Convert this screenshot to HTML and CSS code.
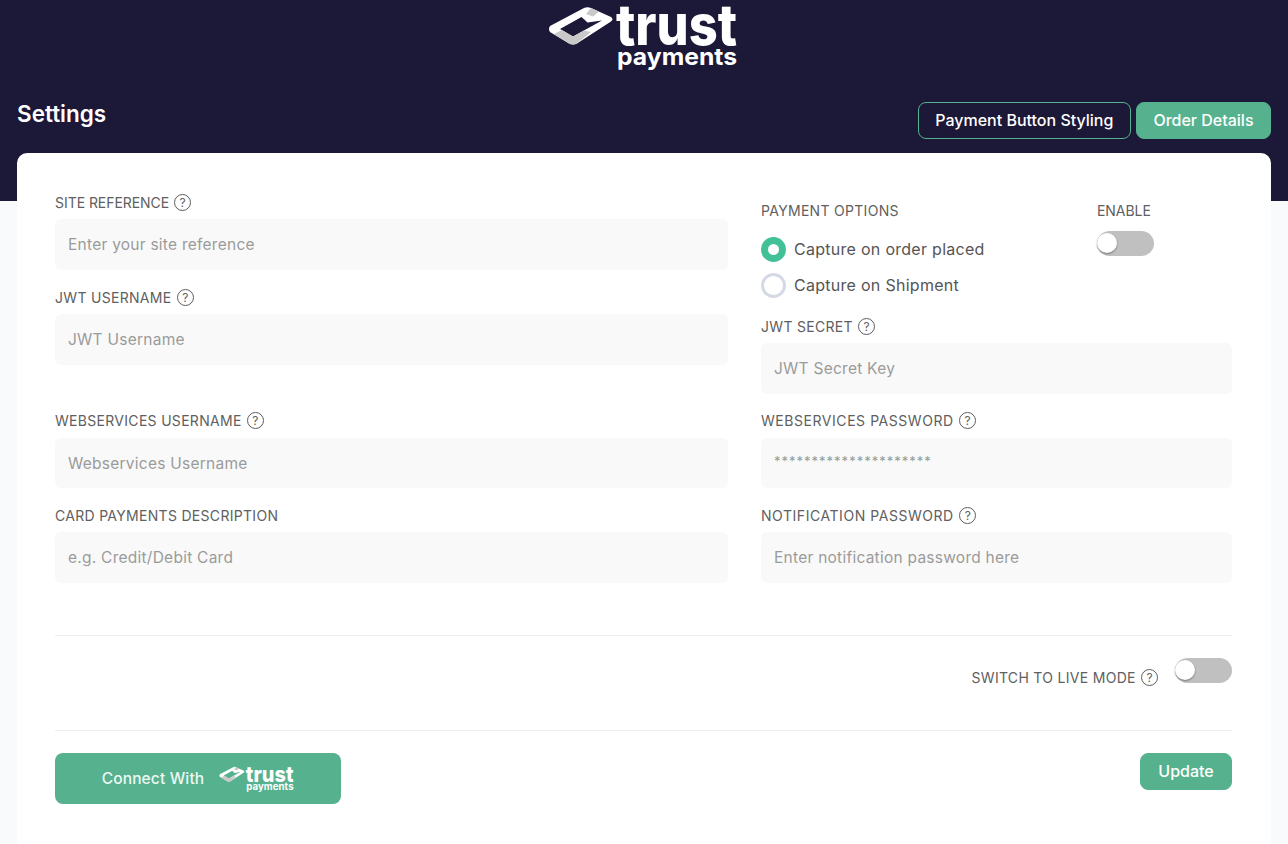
FILE: index.html
```html
<!DOCTYPE html>
<html lang="en">
<head>
  <meta charset="UTF-8" />
  <title>Trust Payments Settings</title>
  <link rel="stylesheet" href="styles.css">
</head>
<body>

<div class="top-bar">
  <svg class="top-logo" viewBox="0 0 190 70">
    <path class="logo-white" fill-rule="evenodd" d="M2 23 L36 5 Q39.500 3.500 43 5 L63 14 Q66 16 63 18.500 L29 40.500 Q25 42.500 21 40.500 L2 29 Q0 26 2 23 Z M12 26 L25 33.500 L54 17.500 L39.500 19.500 L33.500 14 Z"/>
    <path class="logo-grey" d="M43 5 L51 8.500 L45 13.500 L38 11 Z"/>
    <path class="logo-grey" d="M6 31 L14 27 L25 33.500 L36 27.500 L43 29 L29 40.500 Q25 42.500 21 40.500 Z"/>
    <text x="68" y="42" textLength="121" lengthAdjust="spacingAndGlyphs" class="logo-trust">trust</text>
    <text x="69" y="62" textLength="120" lengthAdjust="spacingAndGlyphs" class="logo-payments">payments</text>
  </svg>
  <div class="title-row">
    <h1>Settings</h1>
    <div class="top-btns">
      <button class="btn btn-outline">Payment Button Styling</button>
      <button class="btn btn-green">Order Details</button>
    </div>
  </div>
</div>

<div class="card">
  <div class="form-grid">
    <div>
      <div class="field">
        <label class="narrow">SITE REFERENCE <span class="help">?</span></label>
        <input type="text" placeholder="Enter your site reference" />
      </div>
      <div class="field">
        <label>JWT USERNAME <span class="help">?</span></label>
        <input type="text" placeholder="JWT Username" />
      </div>
    </div>

    <div class="right-top">
      <div class="options-row">
        <div>
          <label>PAYMENT OPTIONS</label>
          <div class="radio-row"><span class="radio checked"></span>Capture on order placed</div>
          <div class="radio-row"><span class="radio"></span>Capture on Shipment</div>
        </div>
        <div class="enable-col">
          <label class="narrow">ENABLE</label>
          <span class="toggle"></span>
        </div>
      </div>
      <div class="field">
        <label>JWT SECRET <span class="help">?</span></label>
        <input type="text" placeholder="JWT Secret Key" />
      </div>
    </div>

    <div class="field up short">
      <label>WEBSERVICES USERNAME <span class="help">?</span></label>
      <input type="text" placeholder="Webservices Username" />
    </div>
    <div class="field up short">
      <label class="wide">WEBSERVICES PASSWORD <span class="help">?</span></label>
      <input class="stars" type="text" value="*********************" />
    </div>

    <div class="field">
      <label>CARD PAYMENTS DESCRIPTION</label>
      <input type="text" placeholder="e.g. Credit/Debit Card" />
    </div>
    <div class="field">
      <label class="wide">NOTIFICATION PASSWORD <span class="help">?</span></label>
      <input type="text" placeholder="Enter notification password here" />
    </div>
  </div>

  <div class="live-row">
    <label>SWITCH TO LIVE MODE <span class="help">?</span></label>
    <span class="toggle"></span>
  </div>

  <div class="bottom-row">
    <button class="btn-connect">Connect With
      <svg class="small-logo" viewBox="0 0 190 70">
        <path class="logo-white" fill-rule="evenodd" d="M2 23 L36 5 Q39.500 3.500 43 5 L63 14 Q66 16 63 18.500 L29 40.500 Q25 42.500 21 40.500 L2 29 Q0 26 2 23 Z M12 26 L25 33.500 L54 17.500 L39.500 19.500 L33.500 14 Z"/>
        <path class="logo-grey" d="M43 5 L51 8.500 L45 13.500 L38 11 Z"/>
        <path class="logo-grey" d="M6 31 L14 27 L25 33.500 L36 27.500 L43 29 L29 40.500 Q25 42.500 21 40.500 Z"/>
        <text x="68" y="42" textLength="121" lengthAdjust="spacingAndGlyphs" class="logo-trust">trust</text>
        <text x="69" y="62" textLength="120" lengthAdjust="spacingAndGlyphs" class="logo-payments">payments</text>
      </svg>
    </button>
    <button class="btn btn-green btn-update">Update</button>
  </div>
</div>

</body>
</html>
```

FILE: styles.css
```css
* {
  box-sizing: border-box;
}

html, body {
  margin: 0;
  padding: 0;
  height: 100%;
  overflow: hidden;
  font-family: 'Inter', 'Open Sans', sans-serif;
  background: #f9fafc;
}

.logo-white {
  fill: #fff;
}

.logo-grey {
  fill: #c9c9c9;
}

.logo-trust {
  font-family: 'Inter', sans-serif;
  font-weight: 800;
  font-size: 56px;
  fill: #fff;
}

.logo-payments {
  font-family: 'Inter', sans-serif;
  font-weight: 700;
  font-size: 24px;
  fill: #fff;
}

.top-bar {
  background: #1c1837;
  height: 201px;
  padding: 3px 17px 0;
}

.top-logo {
  display: block;
  width: 190px;
  height: 70px;
  margin-left: 531px;
  overflow: visible;
}

.title-row {
  display: flex;
  justify-content: space-between;
  margin-top: 26px;
}

h1 {
  margin: 0;
  color: #fff;
  font-size: 22.500px;
  font-weight: 600;
  line-height: 30px;
}

.top-btns {
  display: flex;
  gap: 5px;
  margin-top: 3px;
}

.btn {
  height: 37px;
  padding: 0 16.500px 2px;
  border-radius: 8px;
  border: 1px solid #56b28e;
  color: #fff;
  font-family: inherit;
  font-size: 16px;
  font-weight: 500;
}

.btn-outline {
  background: #1c1837;
}

.btn-green {
  background: #56b28e;
}

.card {
  background: #fff;
  border-radius: 10px 10px 0 0;
  margin: -48px 17px 0;
  padding: 40px 39px 60px 38px;
}

.form-grid {
  display: grid;
  grid-template-columns: 673px 471px;
  column-gap: 33px;
}

label {
  display: block;
  height: 18px;
  line-height: 20px;
  color: #606060;
  font-size: 14px;
  letter-spacing: 0.3px;
}

label.narrow {
  letter-spacing: -0.05px;
}

label.wide {
  letter-spacing: 0.55px;
}

.help {
  display: inline-block;
  width: 17px;
  height: 17px;
  margin-left: 1px;
  border: 1px solid #5c5c5c;
  border-radius: 50%;
  font-size: 12px;
  line-height: 15px;
  letter-spacing: 0;
  text-align: center;
  vertical-align: 1px;
}

.field {
  padding-bottom: 18px;
}

.field input {
  display: block;
  width: 100%;
  height: 51px;
  margin-top: 8px;
  padding: 0 13px;
  background: #f9f9f9;
  border: none;
  border-radius: 6px;
  font-family: inherit;
  font-size: 15.500px;
  letter-spacing: 0.25px;
  color: #777;
  outline: none;
}

.field.up label {
  margin-top: -1px;
}

.field.up input {
  margin-top: 9px;
}

.field.short input {
  height: 50px;
}

.field input::placeholder {
  color: #9b9b9b;
  opacity: 1;
}

.field input.stars {
  color: #8f9e99;
  font-size: 13px;
  letter-spacing: 1px;
  padding-bottom: 4px;
}

.right-top {
  padding-top: 8px;
}

.options-row {
  display: flex;
  justify-content: space-between;
  height: 116px;
  padding-right: 78px;
}

.radio-row {
  display: flex;
  align-items: flex-start;
  gap: 8px;
  height: 25px;
  margin-top: 11px;
  color: #555;
  font-size: 16px;
  line-height: 24px;
  letter-spacing: 0.28px;
}

.options-row label + .radio-row {
  margin-top: 18px;
}

.radio {
  width: 25px;
  height: 25px;
  border: 3px solid #d5d9e6;
  border-radius: 50%;
  background: #fff;
}

.radio.checked {
  border: 7.500px solid #42c098;
}

.enable-col label {
  margin-bottom: 12px;
}

.toggle {
  display: block;
  position: relative;
  width: 57px;
  height: 25px;
  background: #c0c0c0;
  border-radius: 13px;
}

.toggle::before {
  content: '';
  position: absolute;
  top: 2px;
  left: 0;
  width: 20px;
  height: 20px;
  background: #fff;
  border-radius: 50%;
  box-shadow: 0 1px 2px rgba(0, 0, 0, 0.4);
}

.live-row {
  display: flex;
  justify-content: flex-end;
  gap: 17px;
  height: 96px;
  margin-top: 34px;
  padding-top: 22px;
  border-top: 1px solid #eeeeee;
  border-bottom: 1px solid #eeeeee;
}

.live-row label {
  margin-top: 10px;
}

.bottom-row {
  display: flex;
  justify-content: space-between;
  align-items: flex-start;
  padding-top: 22px;
}

.btn-connect {
  display: flex;
  align-items: center;
  justify-content: center;
  gap: 15px;
  width: 286px;
  height: 51px;
  background: #56b28e;
  border: none;
  border-radius: 8px;
  color: #eef8f3;
  font-family: inherit;
  font-size: 15.500px;
  font-weight: 500;
  letter-spacing: 0.15px;
}

.small-logo {
  width: 75px;
  height: 28px;
  overflow: visible;
}

.btn-update {
  width: 92px;
  padding: 0 0 2px;
}
```
